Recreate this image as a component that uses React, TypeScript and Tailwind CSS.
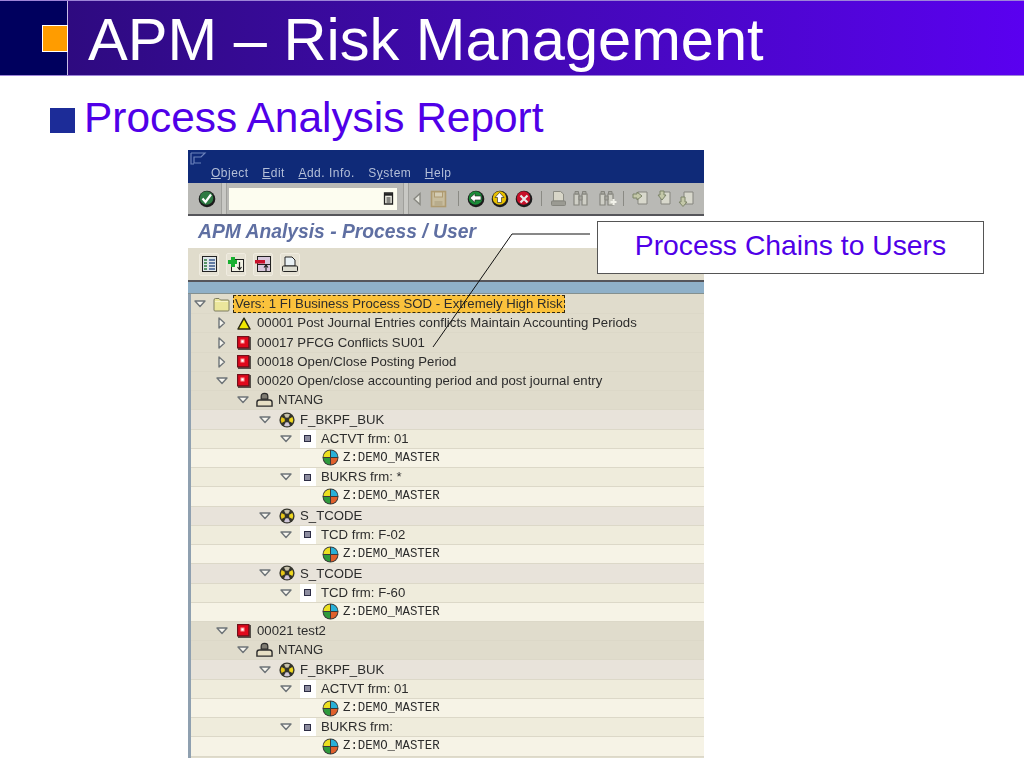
import React from 'react'

// tree icons, all hand drawn because the SAP ones aren't in any icon set
const Tri = ({ open }: { open: boolean }) => (
  <svg width="12" height="12" viewBox="0 0 12 12" className="shrink-0">
    {open ? (
      <path d="M1 3 H11 L6 8.5 Z" fill="#f8f7f0" stroke="#6e7478" strokeWidth="1.4" strokeLinejoin="round" />
    ) : (
      <path d="M3 1 V11 L8.5 6 Z" fill="#f8f7f0" stroke="#6e7478" strokeWidth="1.4" strokeLinejoin="round" />
    )}
  </svg>
)

const Folder = () => (
  <svg width="17" height="15" viewBox="0 0 17 15">
    <path d="M1 3 Q1 1.5 2.5 1.5 H6 L7.5 3 H15 Q16 3 16 4 V13 Q16 14 15 14 H2 Q1 14 1 13 Z" fill="#ebe69c" stroke="#7d7d60" />
    <path d="M2 4.5 H15" stroke="#f8f4c8" />
  </svg>
)

const Warn = () => (
  <svg width="14" height="13" viewBox="0 0 14 13">
    <path d="M7 1.2 L13 12 H1 Z" fill="#f2ea00" stroke="#2c2a10" strokeWidth="1.5" strokeLinejoin="round" />
  </svg>
)

const RedSquare = () => (
  <svg width="14" height="14" viewBox="0 0 14 14">
    <rect x="1" y="1" width="13" height="13" fill="#55504a" />
    <rect x="0" y="0" width="12.5" height="12.5" fill="#70101a" />
    <rect x="1.2" y="1.2" width="10" height="10" fill="#e0081c" />
    <rect x="3.5" y="3.5" width="4" height="4" fill="#ff9a9a" />
    <rect x="4.5" y="4.5" width="2" height="2" fill="#fff" />
  </svg>
)

const UserIcon = () => (
  <svg width="18" height="16" viewBox="0 0 18 16">
    <path d="M5.5 7 V4 Q5.5 1 9 1 Q12.5 1 12.5 4 V7 Z" fill="#7e7b72" stroke="#2c2c2c" strokeWidth="1.3" />
    <path d="M1 14.5 V10.5 Q1 8 3.5 8 H14.5 Q17 8 17 10.5 V14.5 Z" fill="#e8e0c4" stroke="#2c2c2c" strokeWidth="1.5" />
  </svg>
)

const AuthIcon = () => (
  <svg width="16" height="16" viewBox="0 0 16 16">
    <circle cx="8" cy="8" r="7.6" fill="#34342c" />
    <path d="M8 8 L5 2.6 A6 6 0 0 1 11 2.6 Z" fill="#c8c2ac" />
    <path d="M8 8 L13.4 5 A6 6 0 0 1 13.4 11 Z" fill="#f0d820" />
    <path d="M8 8 L11 13.4 A6 6 0 0 1 5 13.4 Z" fill="#cfc6d8" />
    <path d="M8 8 L2.6 11 A6 6 0 0 1 2.6 5 Z" fill="#e8c818" />
    <circle cx="8" cy="8" r="2.4" fill="#34342c" />
  </svg>
)

const FieldIcon = () => (
  <div className="flex h-[18px] w-[16px] items-center justify-center bg-white">
    <div className="h-[7px] w-[7px] border border-[#2c2c44] bg-[#8d8da0]" />
  </div>
)

const GlobeIcon = () => (
  <svg width="17" height="17" viewBox="0 0 17 17">
    <circle cx="8.5" cy="8.5" r="8" fill="#3a3a3a" />
    <path d="M8 8 V1.5 A6.5 6.5 0 0 0 1.5 8 Z" fill="#ece020" />
    <path d="M9 8 V1.5 A6.5 6.5 0 0 1 15.5 8 Z" fill="#28b0d8" />
    <path d="M9 9 H15.5 A6.5 6.5 0 0 1 9 15.5 Z" fill="#e0602c" />
    <path d="M8 9 H1.5 A6.5 6.5 0 0 0 8 15.5 Z" fill="#2e9a3c" />
  </svg>
)

// toolbar icons
const RoundBtn = ({ bg, children }: { bg: string; children: React.ReactNode }) => (
  <svg width="18" height="18" viewBox="0 0 18 18" className="shrink-0">
    <circle cx="9" cy="9" r="8.3" fill="#1c1c1c" />
    <circle cx="8.5" cy="8" r="6.8" fill={bg} />
    {children}
  </svg>
)

const Floppy = () => (
  <svg width="17" height="18" viewBox="0 0 17 18">
    <rect x="1.5" y="1.5" width="14" height="15" fill="#c8bd9e" stroke="#ae9a70" strokeWidth="1.6" />
    <rect x="4.5" y="2" width="8" height="5" fill="#d4ccb4" stroke="#ae9a70" />
    <rect x="4.5" y="11" width="8" height="5" fill="#b8ac8c" />
  </svg>
)

const GrayDoc = () => (
  <svg width="17" height="17" viewBox="0 0 17 17">
    <path d="M3.5 1.5 H10.5 L13.5 4 V11 H3.5 Z" fill="#d8d6c8" stroke="#8c8c84" />
    <rect x="1.5" y="11" width="14" height="4.5" rx="1" fill="#9a9a92" stroke="#85857e" />
  </svg>
)

const Binoculars = ({ plus }: { plus?: boolean }) => (
  <svg width="19" height="17" viewBox="0 0 19 17">
    <path d="M2 4 H7 V15 H2 Z M10 4 H15 V15 H10 Z" fill="#cfcfc6" stroke="#85857e" strokeWidth="1.2" />
    <path d="M3 1.5 H6.5 V4 H3 Z M10.5 1.5 H14 V4 H10.5 Z M7 6 H10 V10 H7 Z" fill="#a8a8a0" stroke="#85857e" />
    {plus && <path d="M15.5 9 V15 M12.5 12 H18.5" stroke="#f2f2ea" strokeWidth="2.2" />}
  </svg>
)

const PageMove = ({ d }: { d: string }) => (
  <svg width="17" height="17" viewBox="0 0 17 17">
    <path d="M6 2 H15 V14 H6 Z" fill="#d8d8cc" stroke="#85857e" />
    <path d={d} fill="#c4c8a8" stroke="#7c8468" />
  </svg>
)

const Sep = () => <div className="h-[15px] w-px bg-[#8a8a84]" />

type Kind = 'folder' | 'warn' | 'red' | 'user' | 'auth' | 'field' | 'globe'

type Row = {
  kind: Kind
  text: string
  open?: boolean
}

const rows: Row[] = [
  { kind: 'folder', text: 'Vers: 1 FI Business Process SOD - Extremely High Risk', open: true },
  { kind: 'warn', text: '00001 Post Journal Entries conflicts Maintain Accounting Periods', open: false },
  { kind: 'red', text: '00017 PFCG Conflicts SU01', open: false },
  { kind: 'red', text: '00018 Open/Close Posting Period', open: false },
  { kind: 'red', text: '00020 Open/close accounting period and post journal entry', open: true },
  { kind: 'user', text: 'NTANG', open: true },
  { kind: 'auth', text: 'F_BKPF_BUK', open: true },
  { kind: 'field', text: 'ACTVT frm: 01', open: true },
  { kind: 'globe', text: 'Z:DEMO_MASTER' },
  { kind: 'field', text: 'BUKRS frm: *', open: true },
  { kind: 'globe', text: 'Z:DEMO_MASTER' },
  { kind: 'auth', text: 'S_TCODE', open: true },
  { kind: 'field', text: 'TCD frm: F-02', open: true },
  { kind: 'globe', text: 'Z:DEMO_MASTER' },
  { kind: 'auth', text: 'S_TCODE', open: true },
  { kind: 'field', text: 'TCD frm: F-60', open: true },
  { kind: 'globe', text: 'Z:DEMO_MASTER' },
  { kind: 'red', text: '00021 test2', open: true },
  { kind: 'user', text: 'NTANG', open: true },
  { kind: 'auth', text: 'F_BKPF_BUK', open: true },
  { kind: 'field', text: 'ACTVT frm: 01', open: true },
  { kind: 'globe', text: 'Z:DEMO_MASTER' },
  { kind: 'field', text: 'BUKRS frm:', open: true },
  { kind: 'globe', text: 'Z:DEMO_MASTER' },
]

const rowStyle: Record<Kind, string> = {
  folder: 'bg-[#e0dccc] pl-[3px]',
  warn: 'bg-[#e0dccc] pl-[25px]',
  red: 'bg-[#e0dccc] pl-[25px]',
  user: 'bg-[#e0dccc] pl-[46px]',
  auth: 'bg-[#e8e3da] pl-[68px]',
  field: 'bg-[#efecdc] pl-[89px]',
  globe: 'bg-[#f6f3e6] pl-[131px]',
}

const iconFor = (kind: Kind) => {
  if (kind === 'folder') return <Folder />
  if (kind === 'warn') return <Warn />
  if (kind === 'red') return <RedSquare />
  if (kind === 'user') return <UserIcon />
  if (kind === 'auth') return <AuthIcon />
  if (kind === 'field') return <FieldIcon />
  return <GlobeIcon />
}

function TreeRow({ row }: { row: Row }) {
  return (
    <div className={`flex h-[19.24px] items-center border-b border-[#dcd8c8] ${rowStyle[row.kind]}`}>
      {row.open !== undefined && <Tri open={row.open} />}
      <div className={`flex w-[17px] shrink-0 items-center justify-center ${row.open !== undefined ? 'ml-[7px]' : ''}`}>
        {iconFor(row.kind)}
      </div>
      {row.kind === 'globe' ? (
        <span className="ml-[4px] font-['Liberation_Mono',monospace] text-[12.4px] text-[#2c2c2c]">Z:DEMO_MASTER</span>
      ) : row.kind === 'folder' ? (
        <span className="ml-[3px] border border-dashed border-[#332a10] bg-[#fbc23c] pr-[1px] pl-[1px] text-[13.2px] leading-[16px] text-[#2c2c2c]">
          {row.text}
        </span>
      ) : (
        <span className="ml-[5px] text-[13.2px] text-[#2c2c2c]">{row.text}</span>
      )}
    </div>
  )
}

const AppBtn = ({ children }: { children: React.ReactNode }) => (
  <div className="flex h-[23px] w-[20px] items-center justify-center rounded-[2px] border border-[#f0ece0] bg-[#e6e2d4]">
    {children}
  </div>
)

export default function App() {
  return (
    <div className="relative h-[768px] w-[1024px] overflow-hidden bg-white font-['Liberation_Sans',Arial,sans-serif]">
      {/* slide header */}
      <div className="flex h-[76px] border-y border-[#9d84d8]">
        <div className="flex w-[68px] items-center justify-end border-r border-[#c8bce8] bg-[#00005e]">
          <div className="h-[27px] w-[26px] translate-x-[1px] border border-white bg-[#ff9c00]" />
        </div>
        <div className="flex-1 bg-gradient-to-r from-[#2e0a80] to-[#5a00f0] pl-[20px] text-[59.6px] leading-[78px] whitespace-nowrap text-white">
          APM – Risk Management
        </div>
      </div>

      {/* bullet */}
      <div className="flex h-[74px] items-center pt-[15px] pl-[50px]">
        <div className="h-[25px] w-[25px] bg-[#1c2c98]" />
        <div className="mb-[5px] ml-[9px] text-[42.4px] leading-none text-[#5000e8]">Process Analysis Report</div>
      </div>

      {/* sap window */}
      <div className="ml-[188px] w-[516px] blur-[0.3px]">
        <div className="h-[33px] bg-[#0f2a78] pt-[2px]">
          <svg width="17" height="14" viewBox="0 0 17 14" className="ml-[2px]">
            <path d="M1 1 H15 L11 5 H4 V11 H11 M1 1 V12 H4" fill="none" stroke="#6d83bc" strokeWidth="1.2" />
          </svg>
          <div className="flex gap-[13.5px] pl-[23px] text-[12px] leading-[14px] tracking-[0.5px] text-[#b4bfd8]">
            <span><u>O</u>bject</span>
            <span><u>E</u>dit</span>
            <span><u>A</u>dd. Info.</span>
            <span>S<u>y</u>stem</span>
            <span><u>H</u>elp</span>
          </div>
        </div>
        <div className="flex h-[33px] items-center border-b-[2px] border-[#55555a] bg-[#b9b9b5]">
          <div className="flex h-full w-[33px] items-center justify-center pl-[4px]">
            <RoundBtn bg="#2d7a42">
              <path d="M4.5 8.5 L7.5 12 L13 4.5" fill="none" stroke="#fff" strokeWidth="2.2" />
            </RoundBtn>
          </div>
          <div className="h-full w-[6px] border-x border-[#a0a09c] bg-[#c8c8c4]" />
          <div className="ml-[2px] flex h-[22px] w-[168px] items-center justify-end bg-[#fdfdf0] pr-[3px]">
            <svg width="11" height="13" viewBox="0 0 11 13">
              <path d="M1.5 1 H9.5 L9.5 12 H1.5 Z" fill="#eeeee4" stroke="#222" strokeWidth="1.3" />
              <path d="M1.5 2.5 H9.5" stroke="#222" strokeWidth="2.4" />
              <path d="M3.5 6 H7.5 M3.5 8 H7.5 M3.5 10 H7.5" stroke="#222" />
            </svg>
          </div>
          <div className="ml-[6px] h-full w-[6px] border-x border-[#a0a09c] bg-[#c8c8c4]" />
          <div className="flex w-[16px] justify-center">
            <svg width="10" height="14" viewBox="0 0 10 14">
              <path d="M8 1.5 V12.5 L2 7 Z" fill="#e4e4dc" stroke="#85857e" strokeWidth="1.3" />
            </svg>
          </div>
          <div className="ml-[5px]"><Floppy /></div>
          <div className="ml-[11px]"><Sep /></div>
          <div className="ml-[8px] flex items-center gap-[6px]">
            <RoundBtn bg="#1a8c38">
              <path d="M3 8 L8 3.5 V6 H14 V10 H8 V12.5 Z" fill="#fff" stroke="#1c1c1c" strokeWidth="0.6" />
            </RoundBtn>
            <RoundBtn bg="#e8c000">
              <path d="M8.5 2.5 L13 7.5 H10.5 V12.5 H6.5 V7.5 H4 Z" fill="#fff" stroke="#1c1c1c" strokeWidth="0.6" />
            </RoundBtn>
            <RoundBtn bg="#c8102a">
              <path d="M5.5 5.5 L12.5 12.5 M12.5 5.5 L5.5 12.5" stroke="#e8e8e8" strokeWidth="2.2" />
            </RoundBtn>
          </div>
          <div className="ml-[8px]"><Sep /></div>
          <div className="ml-[8px]"><GrayDoc /></div>
          <div className="ml-[5px]"><Binoculars /></div>
          <div className="ml-[7px]"><Binoculars plus /></div>
          <div className="ml-[6px]"><Sep /></div>
          <div className="ml-[8px] flex gap-[6px]">
            <PageMove d="M1 4 H5 V2 L10 6 L5 10 V8 H1 Z" />
            <PageMove d="M5 1 V5 H3 L7 10 L11 5 H9 V1 Z" />
            <PageMove d="M3 7 H7 V12 H9 L5 16.5 L1 12 H3 Z" />
          </div>
        </div>
        <div className="h-[32px] bg-white pl-[10px] text-[19.3px] leading-[32px] font-bold text-[#5f6fa2] italic">
          APM Analysis - Process / User
        </div>
        <div className="flex h-[34px] items-center gap-[7px] border-b-[2px] border-[#55555a] bg-[#e0dccc] pl-[11px]">
          <AppBtn>
            <svg width="15" height="16" viewBox="0 0 15 16">
              <rect x="0.5" y="0.5" width="14" height="15" fill="#dfe6ea" stroke="#222" />
              <path d="M2 4 H5 M2 7 H5 M2 10 H5 M2 13 H5" stroke="#2c7a3c" strokeWidth="1.4" />
              <path d="M7 4 H13 M7 7 H13 M7 10 H13 M7 13 H13" stroke="#3a5a8c" strokeWidth="1.4" />
            </svg>
          </AppBtn>
          <AppBtn>
            <svg width="16" height="16" viewBox="0 0 16 16">
              <rect x="3.5" y="3.5" width="12" height="12" fill="#f2f2e4" stroke="#222" />
              <path d="M0 4 H3 V1 H7 V4 H9 V8 H7 V11 H3 V8 H0 Z" fill="#18b030" />
              <path d="M11.5 6 V13 M9.5 11 L11.5 13.5 L13.5 11" fill="none" stroke="#222" strokeWidth="1.2" />
            </svg>
          </AppBtn>
          <AppBtn>
            <svg width="16" height="16" viewBox="0 0 16 16">
              <rect x="2.5" y="0.5" width="13" height="15" fill="#d8c8dc" stroke="#222" />
              <rect x="0" y="4" width="10" height="3.5" fill="#c8102a" />
              <path d="M2.5 8.5 H15" stroke="#222" />
              <path d="M11 15 V9.5 M9 11.5 L11 9 L13 11.5" fill="none" stroke="#222" strokeWidth="1.2" />
            </svg>
          </AppBtn>
          <AppBtn>
            <svg width="16" height="16" viewBox="0 0 16 16">
              <path d="M3 1 H10 L13 4 V10 H3 Z" fill="#e8f0f4" stroke="#222" />
              <rect x="0.5" y="10" width="15" height="5.5" rx="1" fill="#dcdcd0" stroke="#222" />
            </svg>
          </AppBtn>
        </div>
        <div className="h-[12px] border-b border-[#84908f] bg-[#8fb0c8]" />
        <div className="border-l-[3px] border-[#8fa0b0] bg-[#e0dccc] pt-[1px] pb-[1px]">
          {rows.map((row, i) => (
            <TreeRow key={i} row={row} />
          ))}
        </div>
      </div>

      {/* callout over the window */}
      <svg width="170" height="125" viewBox="0 0 170 125" className="absolute top-[228px] left-[428px]">
        <path d="M162 6 H84 L5 119" fill="none" stroke="#111" strokeWidth="1" />
      </svg>
      <div className="absolute top-[221px] left-[597px] flex h-[53px] w-[387px] items-center justify-center border border-[#555] bg-white pb-[4px] text-[28.3px] text-[#5000e8]">
        Process Chains to Users
      </div>
    </div>
  )
}
